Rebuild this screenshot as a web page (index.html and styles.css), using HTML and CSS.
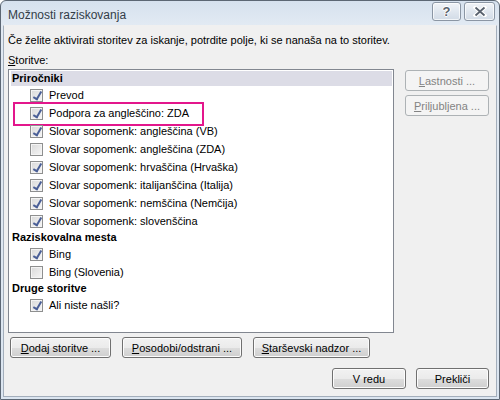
FILE: index.html
```html
<!DOCTYPE html>
<html lang="sl">
<head>
    <meta charset="UTF-8">
    <title>Možnosti raziskovanja</title>
    <link rel="stylesheet" href="styles.css">
</head>
<body>
    <div class="window">
        <div class="titlebar">
            <span class="title">Možnosti raziskovanja</span>
            <div class="caption-buttons">
                <span class="cap-btn help">?</span>
                <span class="cap-btn close">
                    <svg width="14" height="11" viewBox="0 0 14 11">
                        <path d="M2.5 1.5 L11.5 9.5 M11.5 1.5 L2.5 9.5" stroke="#fff" stroke-width="4" stroke-linecap="square"/>
                        <path d="M2.5 1.5 L11.5 9.5 M11.5 1.5 L2.5 9.5" stroke="#59626e" stroke-width="1.8"/>
                    </svg>
                </span>
            </div>
        </div>
        <div class="client">
            <p class="intro">Če želite aktivirati storitev za iskanje, potrdite polje, ki se nanaša na to storitev.</p>
            <p class="label"><u>S</u>toritve:</p>

            <div class="main">
                <div class="listbox">
                    <div class="group">Priročniki</div>
                    <div class="item"><span class="box checked"></span>Prevod</div>
                    <div class="item highlight"><span class="box checked"></span>Podpora za angleščino: ZDA</div>
                    <div class="item"><span class="box checked"></span>Slovar sopomenk: angleščina (VB)</div>
                    <div class="item"><span class="box"></span>Slovar sopomenk: angleščina (ZDA)</div>
                    <div class="item"><span class="box checked"></span>Slovar sopomenk: hrvaščina (Hrvaška)</div>
                    <div class="item"><span class="box checked"></span>Slovar sopomenk: italijanščina (Italija)</div>
                    <div class="item"><span class="box checked"></span>Slovar sopomenk: nemščina (Nemčija)</div>
                    <div class="item"><span class="box checked"></span>Slovar sopomenk: slovenščina</div>
                    <div class="group plain">Raziskovalna mesta</div>
                    <div class="item"><span class="box checked"></span>Bing</div>
                    <div class="item"><span class="box"></span>Bing (Slovenia)</div>
                    <div class="group plain">Druge storitve</div>
                    <div class="item"><span class="box checked"></span>Ali niste našli?</div>
                </div>

                <div class="side-buttons">
                    <button class="btn side" disabled><u>L</u>astnosti ...</button>
                    <button class="btn side" disabled><u>P</u>riljubljena ...</button>
                </div>
            </div>

            <div class="row-buttons">
                <button class="btn wide1"><u>D</u>odaj storitve ...</button>
                <button class="btn wide2"><u>P</u>osodobi/odstrani ...</button>
                <button class="btn wide3"><u>S</u>tarševski nadzor ...</button>
            </div>

            <div class="dialog-buttons">
                <button class="btn ok">V redu</button>
                <button class="btn cancel">Prekliči</button>
            </div>
        </div>
    </div>
</body>
</html>
```

FILE: styles.css
```css
* {
    box-sizing: border-box;
}

body {
    margin: 0;
    font-family: "Liberation Sans", Arial, sans-serif;
    font-size: 11px;
    color: #000;
    background: #fff;
}

.window {
    width: 500px;
    height: 400px;
    border: 1px solid #5c6774;
    border-radius: 6px 6px 0 0;
    background: linear-gradient(#d6e1ee, #e2eaf3 24px, #dbe5f0);
    display: flex;
    flex-direction: column;
}

.titlebar {
    height: 24px;
    flex-shrink: 0;
    display: flex;
    align-items: center;
    justify-content: space-between;
    padding: 0 4px 0 7px;
}

.title {
    font-size: 12px;
    color: #333d48;
    margin-top: 3px;
}

.caption-buttons {
    display: flex;
    gap: 3px;
    align-self: flex-start;
    margin-top: 1px;
}

.cap-btn {
    width: 29px;
    height: 19px;
    border: 1px solid #8b96a4;
    border-radius: 3px;
    background: linear-gradient(#f1f4f8, #e0e7ef 50%, #d2dbe6);
    display: flex;
    align-items: center;
    justify-content: center;
    box-shadow: inset 0 0 0 1px rgba(255, 255, 255, 0.7);
}

.cap-btn.help {
    font-weight: bold;
    font-size: 13px;
    color: #59626e;
    text-shadow: 1px 0 #fff, -1px 0 #fff, 0 1px #fff, 0 -1px #fff;
}

.cap-btn.close {
    width: 31px;
}

.client {
    flex: 1;
    margin: 0 2px 2px;
    background: #f0f0f0;
    border: 1px solid #a3aebb;
    border-top-color: #f0f0f0;
    padding: 0 4px;
    display: flex;
    flex-direction: column;
}

.intro {
    margin: 6px 0 0;
    line-height: 16px;
}

.label {
    margin: 4px 0 0;
    line-height: 16px;
}

.main {
    display: flex;
    gap: 11px;
    margin-top: 1px;
}

.listbox {
    width: 386px;
    height: 264px;
    border: 1px solid #828790;
    background: #fff;
    padding-top: 1px;
}

.group {
    font-weight: bold;
    height: 15px;
    line-height: 15px;
    padding-left: 1px;
    margin: 0 1px 0 2px;
    background: #dcdce6;
}

.group.plain {
    background: none;
}

.item {
    height: 18px;
    display: flex;
    align-items: center;
    padding-left: 21px;
}

/* marco rosa de la captura */
.item.highlight {
    position: relative;
}

.item.highlight::after {
    content: "";
    position: absolute;
    left: 4px;
    top: -2px;
    width: 187px;
    height: 20px;
    border: 2px solid #e3168c;
}

.box {
    width: 13px;
    height: 13px;
    border: 1px solid #8e8f8f;
    background: linear-gradient(135deg, #d9d9d9, #f6f6f6);
    margin-right: 6px;
    position: relative;
    box-shadow: inset 0 0 0 1px #f4f4f4;
}

.box.checked::after {
    content: "";
    position: absolute;
    left: 4px;
    top: 0;
    width: 3px;
    height: 8px;
    border: solid #4a5f97;
    border-width: 0 2px 2px 0;
    transform: rotate(30deg);
}

.side-buttons {
    display: flex;
    flex-direction: column;
    gap: 4px;
    margin-top: 1px;
}

.btn {
    font-family: inherit;
    font-size: 11px;
    color: #000;
    height: 21px;
    padding: 0;
    border: 1px solid #707070;
    border-radius: 3px;
    background: linear-gradient(#f2f2f2, #ebebeb 50%, #dddddd 51%, #cfcfcf);
    box-shadow: inset 0 0 0 1px #fcfcfc;
}

.btn.side {
    width: 84px;
    color: #838383;
    border-color: #adb2b5;
    background: #f4f4f4;
    box-shadow: none;
}

.row-buttons {
    display: flex;
    margin: 4px 0 0 2px;
    gap: 11px;
}

.wide1 {
    width: 101px;
}

.wide2 {
    width: 120px;
}

.wide3 {
    width: 117px;
}

.dialog-buttons {
    display: flex;
    justify-content: flex-end;
    gap: 10px;
    margin-top: 10px;
    padding-right: 3px;
}

.btn.ok {
    width: 74px;
}

.btn.cancel {
    width: 73px;
}
```
